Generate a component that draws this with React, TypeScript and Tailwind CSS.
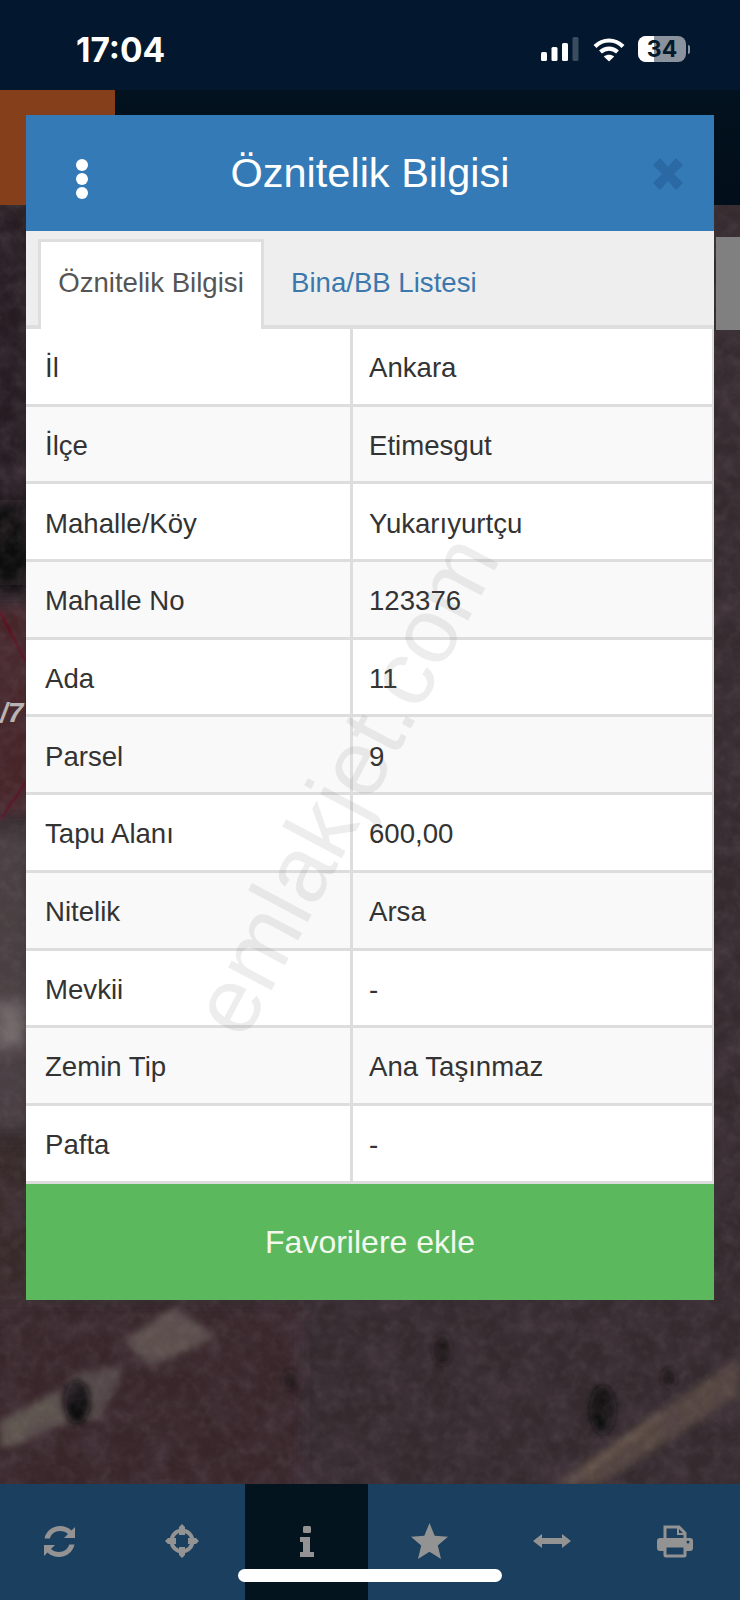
const ROWS = [
  ['İl', 'Ankara'],
  ['İlçe', 'Etimesgut'],
  ['Mahalle/Köy', 'Yukarıyurtçu'],
  ['Mahalle No', '123376'],
  ['Ada', '11'],
  ['Parsel', '9'],
  ['Tapu Alanı', '600,00'],
  ['Nitelik', 'Arsa'],
  ['Mevkii', '-'],
  ['Zemin Tip', 'Ana Taşınmaz'],
  ['Pafta', '-'],
];

const ICON = '#939393';
const BAR = '#1b3f5f';

function RefreshIcon() {
  return (
    <svg width="33" height="33" viewBox="0 0 33 33" className="mr-[4px]" fill={ICON}>
      <path d="M32 2V13H21L25 9C23 7.3 20.3 6 17 6 12 6 8 9 6.8 13.5H1.5C3 6 9.500 1 17 1 21.500 1 25.500 2.700 28.500 5.500Z" />
      <path d="M1 31V20H12L8 24C10 25.700 12.700 27 16 27 21 27 25 24 26.200 19.500H31.500C30 27 23.500 32 16 32 11.500 32 7.500 30.300 4.500 27.500Z" />
    </svg>
  );
}

function CrosshairIcon() {
  return (
    <svg width="34" height="34" viewBox="0 0 34 34" className="mr-[3px]" fill="none">
      <circle cx="17" cy="17" r="10.500" stroke={ICON} strokeWidth="4" />
      <path d="M17 0 20 3V11H14V3ZM17 34 14 31V23H20V31ZM0 17 3 14H11V20H3ZM34 17 31 20H23V14H31Z" fill={ICON} />
    </svg>
  );
}

function InfoIcon() {
  return (
    <svg width="14" height="31" viewBox="0 0 14 31" fill={ICON}>
      <rect x="3" y="0" width="8" height="7" rx="1.500" />
      <path d="M0 11H10V26H14V31H0V26H3V16H0Z" />
    </svg>
  );
}

function StarIcon() {
  return (
    <svg width="37" height="36" viewBox="0 0 37 36" fill={ICON}>
      <path d="M18.500 0 23.700 12.800 37 13.800 26.800 22.500 30 36 18.500 28.700 7 36 10.200 22.500 0 13.800 13.300 12.800Z" />
    </svg>
  );
}

function ArrowsIcon() {
  return (
    <svg width="38" height="16" viewBox="0 0 38 16" fill={ICON}>
      <path d="M0 8 9 1V5H29V1L38 8 29 15V11H9V15Z" />
    </svg>
  );
}

function PrinterIcon() {
  return (
    <svg width="36" height="33" viewBox="0 0 36 33" fill="none">
      <path d="M8 15V2H22L28 8V15" stroke={ICON} strokeWidth="3" />
      <path d="M21 2V9H28" stroke={ICON} strokeWidth="2" />
      <rect x="0" y="13" width="36" height="13" rx="3" fill={ICON} />
      <rect x="8" y="21" width="20" height="10" rx="1" fill={BAR} stroke={ICON} strokeWidth="3" />
      <circle cx="31" cy="17" r="1.500" fill={BAR} />
    </svg>
  );
}

function StatusIcons() {
  return (
    <div className="flex items-center">
      {/* signal */}
      <svg width="38" height="24" viewBox="0 0 38 24" className="mr-[14px]">
        <rect x="0" y="15" width="6" height="9" rx="1.500" fill="#fff" />
        <rect x="10.500" y="10" width="6" height="14" rx="1.500" fill="#fff" />
        <rect x="21" y="6" width="6" height="18" rx="1.500" fill="#fff" />
        <rect x="31.500" y="0" width="6" height="24" rx="1.500" fill="#3b4c5e" />
      </svg>
      {/* wifi */}
      <svg width="32" height="25" viewBox="0 0 32 25" className="mr-[13px]" fill="none" stroke="#fff" strokeWidth="4.200">
        <path d="M2 9.500C10 1.500 22 1.500 30 9.500" />
        <path d="M7.500 15C12.500 10.500 19.500 10.500 24.500 15" />
        <path d="M16 24.500 10.800 19.600C13.800 17 18.200 17 21.200 19.600Z" fill="#fff" stroke="none" />
      </svg>
      {/* battery */}
      <div className="relative flex h-[26px] w-[48px] items-center justify-center overflow-hidden rounded-[8px] bg-[#8a939d]">
        <div className="absolute inset-y-0 left-0 w-[16px] bg-white" />
        <span className="relative text-[23px] leading-none font-bold text-[#06182c] font-['Inter',sans-serif]">34</span>
      </div>
      <div className="ml-[2px] h-[9px] w-[2px] rounded-r bg-[#8a939d]" />
    </div>
  );
}

function MapLayer() {
  return (
    <svg className="absolute inset-0" width="740" height="1279" viewBox="0 205 740 1279">
      <defs>
        <filter id="grainDark" x="0" y="0" width="100%" height="100%">
          <feTurbulence type="fractalNoise" baseFrequency="0.035" numOctaves="5" seed="8" />
          <feColorMatrix values="0 0 0 0 0.08  0 0 0 0 0.05  0 0 0 0 0.07  2 0 0 0 -0.7" />
        </filter>
        <filter id="grainLight" x="0" y="0" width="100%" height="100%">
          <feTurbulence type="fractalNoise" baseFrequency="0.09" numOctaves="3" seed="21" />
          <feColorMatrix values="0 0 0 0 0.6  0 0 0 0 0.54  0 0 0 0 0.55  1.5 0 0 0 -0.6" />
        </filter>
        <filter id="soft" x="-50%" y="-50%" width="200%" height="200%"><feGaussianBlur stdDeviation="7" /></filter>
        <filter id="softer" x="-50%" y="-50%" width="200%" height="200%"><feGaussianBlur stdDeviation="3.500" /></filter>
      </defs>
      <rect x="0" y="205" width="740" height="1279" fill="#352b2f" />
      {/* left strip */}
      <rect x="-20" y="205" width="50" height="390" fill="#261f23" filter="url(#soft)" />
      <rect x="-20" y="500" width="50" height="85" fill="#0b090d" filter="url(#soft)" />
      <rect x="-20" y="605" width="50" height="210" fill="#47282c" filter="url(#softer)" />
      <rect x="-20" y="830" width="50" height="300" fill="#4a4143" filter="url(#soft)" />
      <rect x="-6" y="1000" width="30" height="50" fill="#736a6c" filter="url(#soft)" />
      <rect x="-20" y="1140" width="50" height="170" fill="#38292b" filter="url(#soft)" />
      <path d="M0 612 26 662M0 820 26 782" stroke="#5c1222" strokeWidth="3" fill="none" />
      {/* lower ground */}
      <rect x="-20" y="1305" width="320" height="190" fill="#372829" filter="url(#soft)" />
      <path d="M123 1340 175 1307 217 1337 150 1367Z" fill="#5e524f" filter="url(#softer)" />
      <path d="M70 1375 125 1365 100 1420 60 1420Z" fill="#54494a" filter="url(#softer)" />
      <path d="M0 1420 60 1390 70 1420 14 1447H0Z" fill="#5f5450" filter="url(#softer)" />
      <path d="M552 1484 740 1357V1395L600 1484Z" fill="#554740" filter="url(#softer)" />
      <path d="M570 1484 660 1415" stroke="#7a6759" strokeWidth="3" filter="url(#softer)" />
      <ellipse cx="77" cy="1402" rx="13" ry="22" fill="#09070b" filter="url(#softer)" />
      <ellipse cx="603" cy="1410" rx="13" ry="25" fill="#0f0c11" filter="url(#softer)" />
      <ellipse cx="442" cy="1350" rx="8" ry="14" fill="#1c1619" filter="url(#softer)" />
      <ellipse cx="290" cy="1380" rx="6" ry="9" fill="#1a1418" filter="url(#softer)" />
      <ellipse cx="669" cy="1378" rx="6" ry="9" fill="#1a1418" filter="url(#softer)" />
      <rect x="0" y="205" width="740" height="1279" filter="url(#grainDark)" opacity="0.45" />
      <rect x="0" y="205" width="740" height="1279" filter="url(#grainLight)" opacity="0.1" />
      {/* scrollbar thumb */}
      <rect x="716" y="237" width="24" height="93" fill="#808080" />
    </svg>
  );
}

export default function App() {
  return (
    <div className="relative flex h-[1600px] w-[740px] flex-col overflow-hidden bg-[#372e32] font-['Liberation_Sans',sans-serif]">
      {/* Status bar */}
      <div className="flex h-[90px] items-center justify-between bg-[#03182e] pt-[8px] pr-[50px] pl-[76px]">
        <span className="mt-[3px] text-[33.500px] leading-none font-bold text-white font-['Inter',sans-serif]">17:04</span>
        <StatusIcons />
      </div>

      {/* App top bar */}
      <div className="h-[115px] bg-gradient-to-b from-[#03121f] to-[#020e1a]">
        <div className="h-full w-[115px] bg-[#853f1a]" />
      </div>

      {/* Map */}
      <div className="relative flex-1">
        <MapLayer />
        <div className="absolute top-[487px] left-[0px] text-[28px] font-bold text-[#b9b4b4] italic">/7</div>
      </div>

      {/* Bottom toolbar */}
      <div className="grid h-[116px] grid-cols-6 bg-[#1b3f5f] pr-[4px]">
        <div className="flex items-center justify-center pb-[2px]"><RefreshIcon /></div>
        <div className="flex items-center justify-center pb-[2px]"><CrosshairIcon /></div>
        <div className="flex items-center justify-center bg-[#03141f] pb-[2px]"><InfoIcon /></div>
        <div className="flex items-center justify-center pb-[2px]"><StarIcon /></div>
        <div className="flex items-center justify-center pb-[2px]"><ArrowsIcon /></div>
        <div className="flex items-center justify-center pb-[2px]"><PrinterIcon /></div>
      </div>

      {/* Home indicator */}
      <div className="absolute bottom-[18px] left-[238px] h-[13px] w-[264px] rounded-full bg-white" />

      {/* Modal */}
      <div className="absolute top-[115px] left-[26px] w-[688px]">
        <div className="relative flex h-[116px] items-center justify-center bg-[#337ab7] text-[41.500px] text-white">
          <div className="absolute top-[44px] left-[50px] flex flex-col gap-[2px]">
            <div className="h-[12px] w-[12px] rounded-full bg-white" />
            <div className="h-[12px] w-[12px] rounded-full bg-white" />
            <div className="h-[12px] w-[12px] rounded-full bg-white" />
          </div>
          Öznitelik Bilgisi
          <svg width="30" height="32" viewBox="0 0 30 32" className="absolute top-[43px] right-[31px]" fill="#2a69a3">
            <path d="M0 7 7 0 15 9 23 0 30 7 21 16 30 25 23 32 15 23 7 32 0 25 9 16Z" />
          </svg>
        </div>

        <div className="flex h-[98px] items-end border-b-[4px] border-[#dedede] bg-[#eeeeee] pl-[12px]">
          <div className="-mb-[4px] flex h-[90px] w-[226px] items-center justify-center border-x-[3px] border-t-[3px] border-[#dedede] bg-white pb-[5px] text-[27.600px] text-[#555555]">
            Öznitelik Bilgisi
          </div>
          <div className="flex h-[86px] items-center pt-[2px] pl-[27px] text-[27.600px] text-[#3a78ad]">Bina/BB Listesi</div>
        </div>

        <div className="border-r-[2px] border-[#dddddd]">
          {ROWS.map(([label, value], i) => (
            <div
              key={label}
              className={`flex h-[77.700px] border-b-[3px] border-[#dddddd] text-[27.600px] text-[#333333] ${i % 2 === 0 ? 'bg-white' : 'bg-[#f9f9f9]'}`}
            >
              <div className="flex w-[327px] items-center border-r-[3px] border-[#dddddd] pt-[3px] pl-[19px]">{label}</div>
              <div className="flex items-center pt-[3px] pl-[16px]">{value}</div>
            </div>
          ))}
        </div>

        <div className="flex h-[116px] items-center justify-center bg-[#5cb85c] text-[32px] text-[#f2f8ee]">Favorilere ekle</div>
      </div>

      {/* Watermark */}
      <div className="pointer-events-none absolute top-[785px] left-[345px] -translate-x-1/2 -translate-y-1/2 -rotate-[62deg] text-[93px] leading-none whitespace-nowrap text-[#6e6e6e]/12">
        emlakjet.com
      </div>
    </div>
  );
}
